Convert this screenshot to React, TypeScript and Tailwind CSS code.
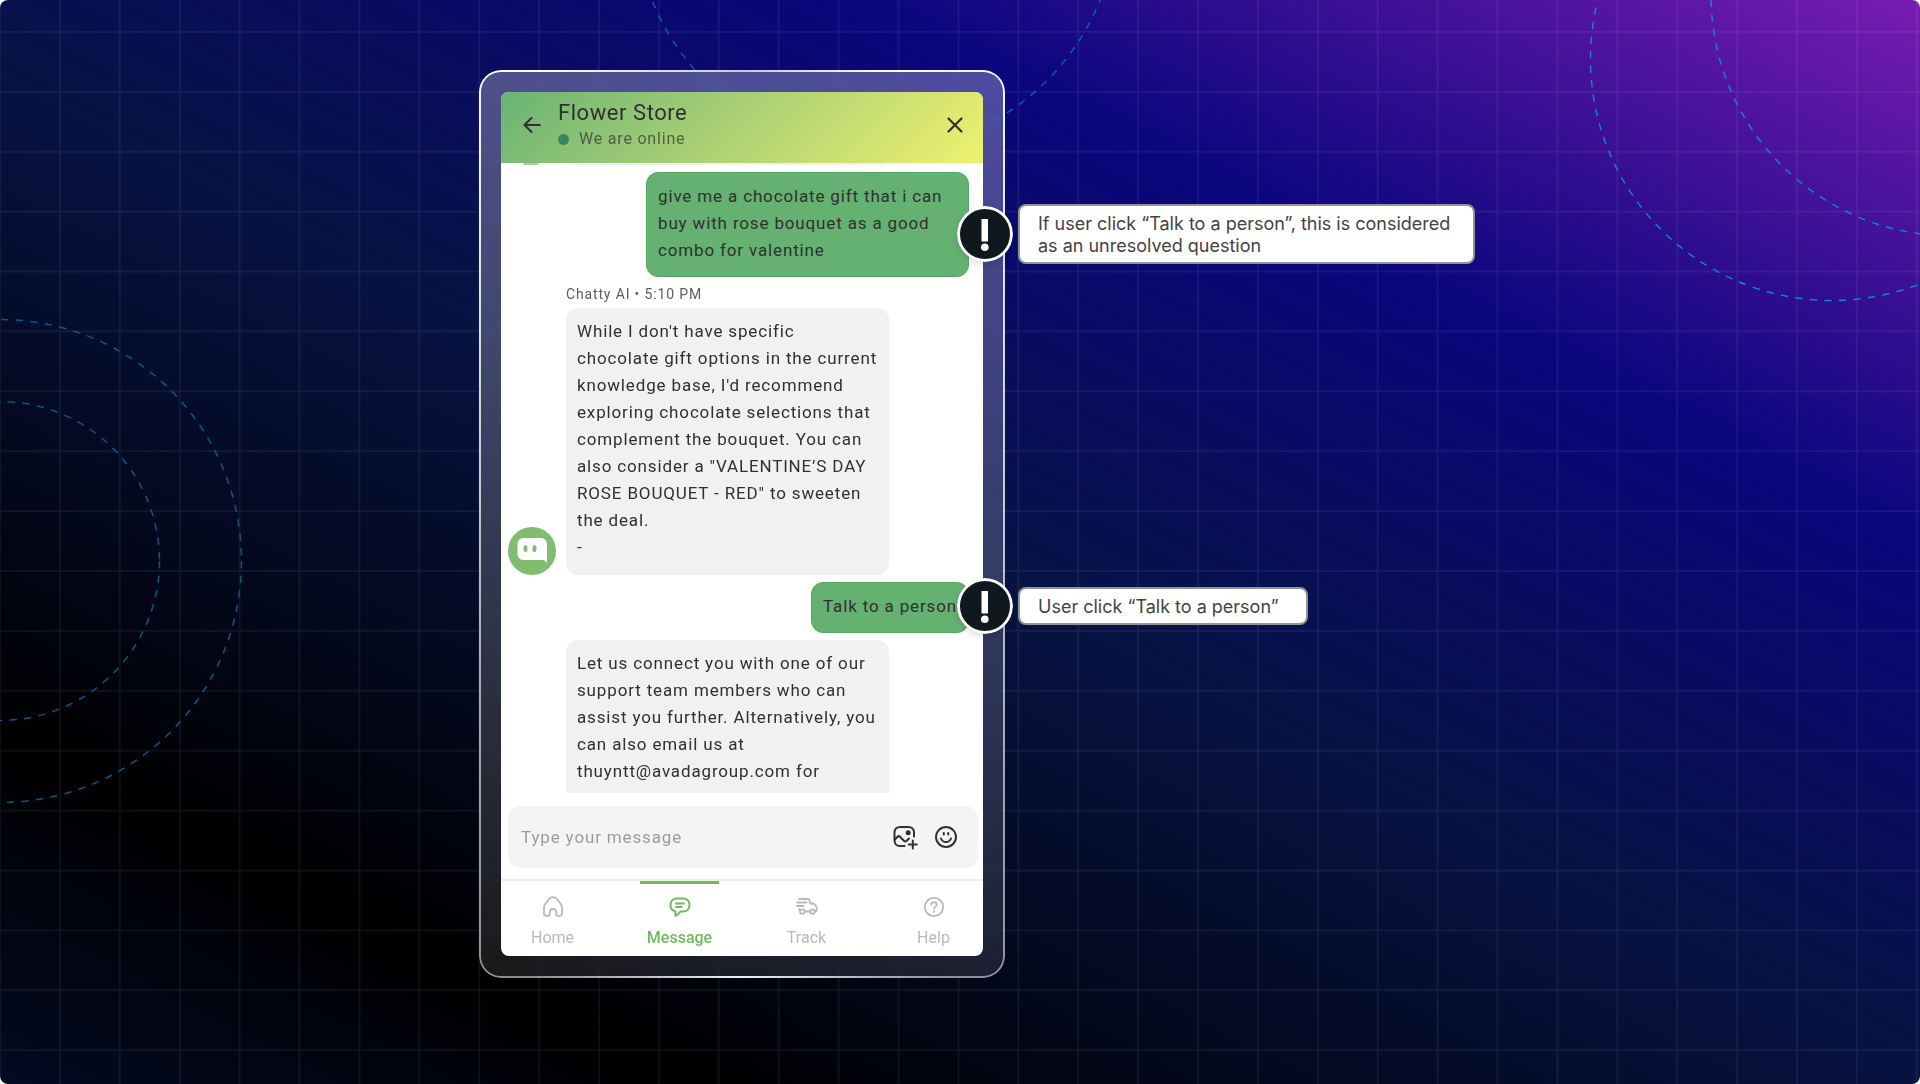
import { useState } from 'react'
import classNames from 'clsx'

type IconProps = { className?: string }

type ChatMessage = {
  id: number
  from: 'bot' | 'user'
  text: string
  author?: string
  time?: string
  showAvatar?: boolean
  clipped?: boolean
  note?: string
  noteClass?: string
}

const messages: ChatMessage[] = [
  {
    id: 1,
    from: 'user',
    text: 'give me a chocolate gift that i can buy with rose bouquet as a good combo for valentine',
    note: 'If user click “Talk to a person”, this is considered as an unresolved question',
    noteClass: 'top-[31px] w-[518px]',
  },
  {
    id: 2,
    from: 'bot',
    text: 'While I don\'t have specific chocolate gift options in the current knowledge base, I\'d recommend exploring chocolate selections that complement the bouquet. You can also consider a "VALENTINE’S DAY ROSE BOUQUET - RED" to sweeten the deal.\n-',
    author: 'Chatty AI',
    time: '5:10 PM',
    showAvatar: true,
  },
  {
    id: 3,
    from: 'user',
    text: 'Talk to a person',
    note: 'User click “Talk to a person”',
    noteClass: '-top-[5px] w-[351px]',
  },
  {
    id: 4,
    from: 'bot',
    text: 'Let us connect you with one of our support team members who can assist you further. Alternatively, you can also email us at thuyntt@avadagroup.com for',
    clipped: true,
  },
]

const HomeIcon = ({ className }: IconProps) => (
  <svg viewBox="0 0 24 24" fill="none" stroke="currentColor" strokeWidth="1.8" strokeLinejoin="round" className={className}>
    <path d="M3 12.6c0-1.4.4-2.5 1.2-3.6l3.6-4.8c2.200-2.800 6.200-2.800 8.400 0l3.600 4.800c.8 1.100 1.200 2.200 1.200 3.600v5.700c0 1.600-1 2.600-2.500 2.600h-1.600c-1.100 0-1.700-.7-1.700-1.700v-2.300c0-1.800-1.200-2.900-3.200-2.900s-3.200 1.100-3.200 2.900v2.300c0 1-.6 1.700-1.700 1.700H5.500C4 20.900 3 19.900 3 18.300z" />
  </svg>
)

const MessageIcon = ({ className }: IconProps) => (
  <svg viewBox="0 0 24 24" fill="none" stroke="currentColor" strokeWidth="2" strokeLinecap="round" strokeLinejoin="round" className={className}>
    <path d="M9 3.5h6c3.800 0 6.500 2.500 6.500 6.500s-2.700 6.500-6.500 6.500h-2.500c-1.300 1.800-3 3.300-5 4.300.2-1.500.2-3-.3-4.600C4.300 15.500 2.500 13.200 2.500 10c0-4 2.700-6.500 6.500-6.500z" />
    <path d="M8 8.500h8M8 12h5.500" />
  </svg>
)

const TrackIcon = ({ className }: IconProps) => (
  <svg viewBox="0 0 24 24" fill="none" stroke="currentColor" strokeWidth="1.8" strokeLinecap="round" strokeLinejoin="round" className={className}>
    <path d="M4 4h8.800c.9 0 1.500.4 1.700 1.300l.6 3.200h2.600c.8 0 1.400.3 1.900.9l1.400 1.600c.5.6.7 1.100.7 1.800v1.900c0 1-.5 1.700-1.400 1.900M2 7.500h9.500M2 11h6.500M4.200 14v.8M9.800 16.500h5" />
    <circle cx="7.3" cy="16.600" r="2.3" />
    <circle cx="17.5" cy="16.600" r="2.3" />
  </svg>
)

const HelpIcon = ({ className }: IconProps) => (
  <svg viewBox="0 0 24 24" fill="none" stroke="currentColor" strokeWidth="1.8" strokeLinecap="round" className={className}>
    <circle cx="12" cy="12" r="9.2" />
    <path d="M9.3 9.700c0-1.500 1.200-2.500 2.700-2.500s2.700 1 2.700 2.400c0 1.200-.7 1.700-1.500 2.300-.8.500-1.200.9-1.200 1.800" />
    <circle cx="12" cy="16.8" r="1.2" fill="currentColor" stroke="none" />
  </svg>
)

const ImageIcon = ({ className }: IconProps) => (
  <svg viewBox="0 0 26 26" fill="none" stroke="currentColor" strokeWidth="2" strokeLinecap="round" strokeLinejoin="round" className={className}>
    <path d="M12.500 22H8c-3.300 0-5.500-2.200-5.500-5.500V8.500C2.500 5.200 4.700 3 8 3h8.500C19.800 3 22 5.200 22 8.500v4" />
    <path d="M2.800 15.500l2.800-2.800c.7-.7 1.600-.7 2.300 0l4.300 4.300c.7.7 1.500.7 2.200 0l2.600-2.500" />
    <path d="M20.800 16.500v8M16.800 20.500h8" />
    <circle cx="16.2" cy="8.8" r="1.5" fill="currentColor" />
  </svg>
)

const SmileIcon = ({ className }: IconProps) => (
  <svg viewBox="0 0 24 24" fill="none" stroke="currentColor" strokeWidth="2" strokeLinecap="round" className={className}>
    <circle cx="12" cy="12" r="10" />
    <path d="M7 13.500c.8 2.200 2.700 3.500 5 3.500s4.200-1.300 5-3.500M9.800 8v1.500M14.200 8v1.500" />
  </svg>
)

const BotAvatar = () => (
  <svg viewBox="0 0 48 48" className="w-12 h-12 shrink-0" aria-label="Chatty AI" role="img">
    <circle cx="24" cy="24" r="24" fill="#7fbe6e" />
    <path d="M16 11h16.500c4 0 6.500 2.500 6.500 6.500V36.500c-.8-2.300-2.300-3.500-5-3.500H16c-4.200 0-6.500-2.500-6.500-6.500v-9c0-4 2.300-6.500 6.500-6.500z" fill="#fff" />
    <ellipse cx="17.5" cy="21.5" rx="2" ry="3.5" fill="#7fbe6e" />
    <ellipse cx="26.5" cy="21.5" rx="2" ry="3.5" fill="#7fbe6e" />
  </svg>
)

const tabs = [
  { name: 'Home', Icon: HomeIcon },
  { name: 'Message', Icon: MessageIcon },
  { name: 'Track', Icon: TrackIcon },
  { name: 'Help', Icon: HelpIcon },
]

const Backdrop = () => (
  <svg
    className="absolute inset-0 w-full h-full"
    viewBox="0 0 1920 1084"
    preserveAspectRatio="xMidYMid slice"
    fill="none"
    aria-hidden="true"
  >
    <defs>
      <pattern id="grid" x="-1" y="-29" width="59.9" height="59.9" patternUnits="userSpaceOnUse">
        <path d="M1 0v59.9M0 1h59.9" stroke="#fff" strokeOpacity="0.07" strokeWidth="1.5" />
      </pattern>
    </defs>
    <rect width="1920" height="1084" fill="url(#grid)" />
    <g strokeWidth="1.5" strokeDasharray="7.3 7.3">
      <circle cx="0" cy="561" r="241.5" stroke="#055b88" />
      <circle cx="0" cy="561" r="159.5" stroke="#055b88" />
      <circle cx="876" cy="-90" r="241.5" stroke="#0b5cab" />
      <circle cx="1832" cy="59" r="241.5" stroke="#1283cc" />
      <circle cx="1952" cy="-5" r="241" stroke="#1283cc" />
    </g>
  </svg>
)

/* callout that hangs off the right edge of a bubble */
const Note = ({ text, className }: { text: string; className?: string }) => (
  <div className={classNames('absolute left-full z-10 -ml-[11px] flex items-center gap-[5px]', className)}>
    <svg viewBox="0 0 56 56" className="w-14 h-14 shrink-0 rounded-full drop-shadow-md" aria-hidden="true">
      <circle cx="28" cy="28" r="26.5" fill="#0f181e" stroke="#fff" strokeWidth="3" />
      <rect x="24.5" y="13" width="6.5" height="22.5" fill="#fff" />
      <circle cx="27.8" cy="41.3" r="3.8" fill="#fff" />
    </svg>
    <p className="flex-1 rounded-lg border-2 border-[#949494] bg-white px-[18px] pt-[7px] pb-[5px] font-['Inter',sans-serif] text-[18px] leading-[22px] tracking-normal text-[#434343]">
      {text}
    </p>
  </div>
)

const MessageRow = ({ from, text, author, time, showAvatar, clipped, note, noteClass }: ChatMessage) => {
  if (from === 'user') {
    return (
      <li className="flex justify-end pr-[14px]">
        <div className="relative max-w-[323px] rounded-xl border border-[#55a864] bg-[#65b172] px-[11px] pt-[10px] pb-[12px] text-[#303030]">
          <p>{text}</p>
          {note && <Note text={note} className={noteClass} />}
        </div>
      </li>
    )
  }
  return (
    <li className="flex items-end gap-[10px] pl-[7px]">
      {showAvatar ? <BotAvatar /> : <div className="w-12 shrink-0" />}
      <div className="w-[323px]">
        {author && (
          <p className="pb-1 text-[14px] leading-[20px] text-[#5c5c5c]">
            {author} • {time}
          </p>
        )}
        <p
          className={classNames('bg-[#f1f1f1] pl-[11px] pr-[9px] pt-[10px] pb-[14px] whitespace-pre-line text-[#303030]', {
            'rounded-t-xl': clipped,
            'rounded-xl': !clipped,
          })}
        >
          {text}
        </p>
      </div>
    </li>
  )
}

export default function App() {
  const [activeTab, setActiveTab] = useState('Message')
  const [draft, setDraft] = useState('')

  return (
    <main className="relative min-h-screen overflow-hidden rounded-lg bg-[linear-gradient(27deg,#030a22_0%,#000000_17%,#071343_49%,#0a067e_74%,#771cb2_100%)] pt-[70px] pb-[106px] pl-[calc(25%-1px)] font-['Roboto',sans-serif]">
      <Backdrop />
      <div className="relative w-full max-w-[526px] rounded-[22px] bg-linear-to-b from-white/28 to-white/10 p-[22px] backdrop-blur-sm">
        {/* hairline around the glass frame */}
        <span className="absolute inset-0 rounded-[22px] p-[2px] bg-[conic-gradient(#ffffffb0_0deg,#ffffff_18deg,#ffffffd0_50deg,#ffffffa0_120deg,#ffffff80_155deg,#fffffff0_180deg,#ffffff80_205deg,#ffffffa0_250deg,#ffffffd0_310deg,#ffffff_335deg,#ffffffb0_360deg)] [mask:linear-gradient(#000_0_0)_content-box_exclude,linear-gradient(#000_0_0)]" />

        <section className="relative rounded-lg bg-white">
          <header className="flex items-center rounded-t-lg bg-linear-135 from-[#69b374] to-[#eff16e] pt-[8px] pb-[11px] pl-5 pr-[17px] text-[#303030]">
            <button aria-label="Back" className="flex h-6 w-[22px] items-center justify-center">
              <svg viewBox="0 0 22 22" fill="none" stroke="currentColor" strokeWidth="2" strokeLinecap="round" strokeLinejoin="round" className="w-[22px] h-[22px]">
                <path d="M19 10H3.500M10.500 3l-7 7 7 7" />
              </svg>
            </button>
            <div className="ml-[15px] flex-1">
              <h1 className="text-[22px] leading-[26px] tracking-wide">Flower Store</h1>
              <p className="flex items-center gap-[10px] text-[16px] leading-[26px] tracking-wider text-[#303030]/70">
                <span className="h-[11px] w-[11px] rounded-full bg-[#38875f]" />
                We are online
              </p>
            </div>
            <button aria-label="Close" className="flex h-6 w-[22px] items-center justify-center">
              <svg viewBox="0 0 22 22" fill="none" stroke="currentColor" strokeWidth="2.2" strokeLinecap="round" className="w-[22px] h-[22px]">
                <path d="M4.500 3.500l13 13M17.500 3.500l-13 13" />
              </svg>
            </button>
          </header>

          <div className="flex h-[630px] flex-col overflow-x-visible overflow-y-clip">
            {/* tail end of the message scrolled out of view */}
            <div className="flex h-[9px] shrink-0 justify-start">
              <span className="ml-[22px] h-[2px] w-[16px] rounded-b-full bg-[#7fbe6e]/70" />
              <span className="ml-[32px] h-[2px] w-[313px] rounded-b-full bg-[#f1f1f1]" />
            </div>
            <ul className="flex flex-col gap-[7px] text-[17px] leading-[27px] tracking-wider">
              {messages.map((message) => (
                <MessageRow key={message.id} {...message} />
              ))}
            </ul>
          </div>

          <form
            className="ml-[7px] mr-[5px] mt-[13px] mb-[11px] flex h-[62px] items-center rounded-xl bg-[#f4f4f4] pl-[13px] pr-5"
            onSubmit={(e) => e.preventDefault()}
          >
            <input
              type="text"
              aria-label="Type your message"
              placeholder="Type your message"
              value={draft}
              onChange={(e) => setDraft(e.target.value)}
              className="min-w-0 flex-1 bg-transparent text-[17px] leading-[26px] tracking-wider text-[#303030] outline-none placeholder:text-[#9c9c9c]"
            />
            <button type="button" aria-label="Add image" className="text-[#303030]">
              <ImageIcon className="w-[26px] h-[26px]" />
            </button>
            <button type="button" aria-label="Add emoji" className="ml-4 text-[#303030]">
              <SmileIcon className="w-6 h-6" />
            </button>
          </form>

          <nav className="flex justify-between border-t-2 border-[#eeeeee] pl-3 pr-[10px]">
            {tabs.map(({ name, Icon }) => (
              <button
                key={name}
                onClick={() => setActiveTab(name)}
                className={classNames('flex w-[79px] flex-col items-center border-t-[3px] pt-[11px] pb-[5px] text-[16px] leading-[26px]', {
                  'border-[#6dba5f] text-[#6dba5f] font-medium': activeTab === name,
                  'border-transparent text-[#b9b9b9]': activeTab !== name,
                })}
              >
                <Icon className="mb-[6px] w-6 h-6" />
                {name}
              </button>
            ))}
          </nav>
        </section>
      </div>
    </main>
  )
}
